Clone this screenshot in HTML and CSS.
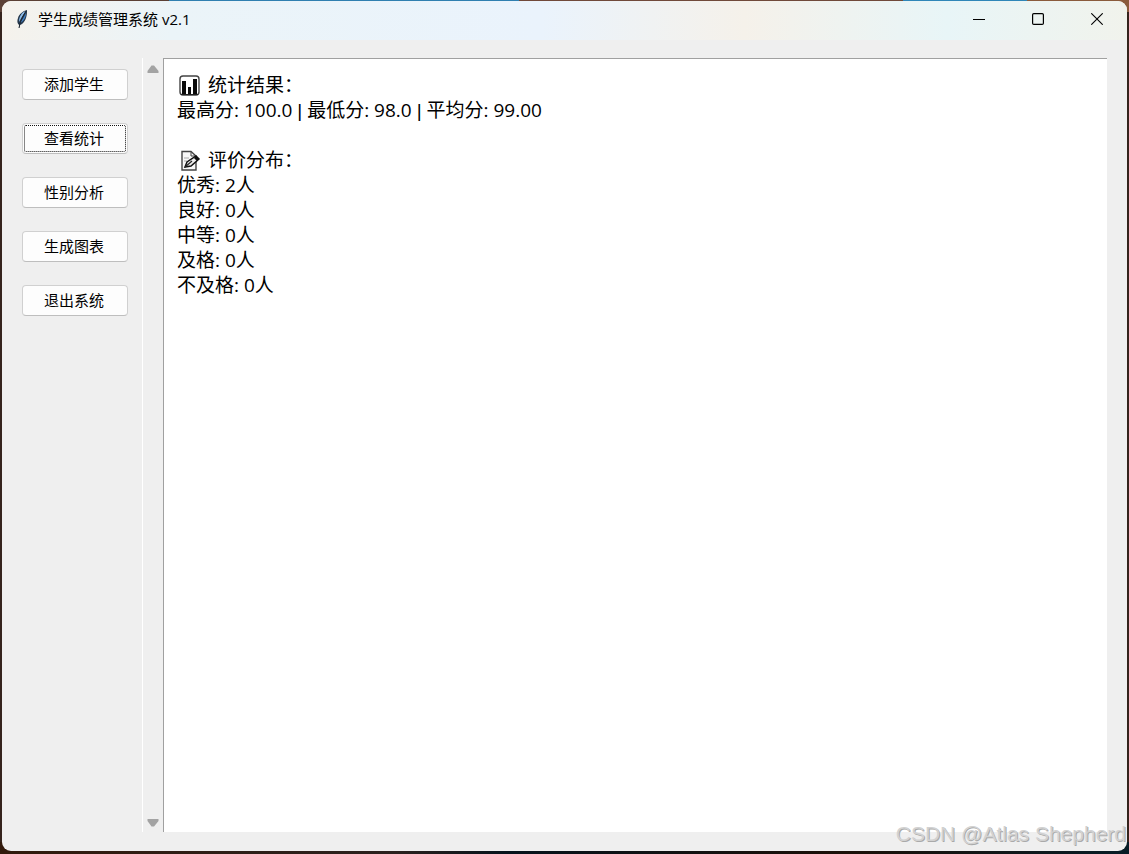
FILE: index.html
```html
<!DOCTYPE html>
<html lang="zh-CN">
<head>
    <meta charset="UTF-8">
    <meta name="viewport" content="width=device-width, initial-scale=1.0">
    <title>学生成绩管理系统 v2.1</title>
    <link rel="stylesheet" href="styles.css">
</head>
<body>
    <div class="window">
        <header class="titlebar">
            <svg class="feather" width="14" height="20" viewBox="0 0 14 20">
                <path d="M12 1C8 2 4 5 3 9C2 12 2 14 4 16L4 19L5 16C8 15 10 12 11 9C12 6 12 3 12 1Z" fill="#26384c"/>
                <path d="M11 2C7 3 4 7 4 13C6 9 8 6 11 2Z" fill="#8fbdea"/>
                <path d="M11 4C11 8 9 12 5 14C7 11 9 8 11 4Z" fill="#3f7fc4"/>
                <path d="M11 2C8 7 5 12 4 19" fill="none" stroke="#1c2530" stroke-width="1"/>
            </svg>
            <h1>学生成绩管理系统 v2.1</h1>
            <div class="controls">
                <button type="button" aria-label="最小化">
                    <svg width="12" height="12"><path d="M0 6.5H12" stroke="#000"/></svg>
                </button>
                <button type="button" aria-label="最大化">
                    <svg width="12" height="12"><rect x="0.6" y="0.6" width="10.8" height="10.8" rx="1.2" fill="none" stroke="#000" stroke-width="1.2"/></svg>
                </button>
                <button type="button" aria-label="关闭">
                    <svg width="12" height="12"><path d="M0.3 0.3L11.7 11.7M11.7 0.3L0.3 11.7" stroke="#000" stroke-width="1.1"/></svg>
                </button>
            </div>
        </header>
        <main class="content">
            <nav class="menu">
                <button type="button">添加学生</button>
                <button type="button" class="active">查看统计</button>
                <button type="button">性别分析</button>
                <button type="button">生成图表</button>
                <button type="button">退出系统</button>
            </nav>
            <div class="scrollbar">
                <button type="button" aria-label="向上滚动">
                    <svg width="12" height="8"><path d="M4.5 0.5H7L11.5 6V8H0.5V6Z" fill="#a3a3a3"/></svg>
                </button>
                <button type="button" aria-label="向下滚动">
                    <svg width="12" height="8"><path d="M0.5 0H11.5V2L7 7.5H4.5L0.5 2Z" fill="#a3a3a3"/></svg>
                </button>
            </div>
            <section class="output">
                <p class="heading">
                    <svg width="22" height="22" viewBox="0 0 22 22">
                        <rect x="1" y="1" width="19" height="19" rx="3" fill="#fff" stroke="#444" stroke-width="1.4"/>
                        <path d="M3 6H7V20H3ZM9 12H12V20H9ZM14 4H18V20H14Z" fill="#0a0a0a"/>
                        <path d="M2 19.5H19" stroke="#222"/>
                    </svg>
                    统计结果：
                </p>
                <p>最高分: 100.0 <span class="bar">|</span> 最低分: 98.0 <span class="bar">|</span> 平均分: 99.00</p>
                <br>
                <p class="heading">
                    <svg width="22" height="22" viewBox="0 0 22 22">
                        <path d="M3 1.5H12L17 6V20H3Z" fill="#f8f8f8" stroke="#444" stroke-width="1.4"/>
                        <path d="M12 2V6H17" fill="none" stroke="#444"/>
                        <path d="M5 8H10M5 11H8" stroke="#aaa"/>
                        <path d="M6 17L8 12L17 6L20 9L12 16Z" fill="#eee" stroke="#111" stroke-width="1.5"/>
                        <path d="M16 7L19 10" stroke="#111" stroke-width="3"/>
                        <path d="M6 17L13 11" stroke="#222" stroke-width="1.2"/>
                    </svg>
                    评价分布：
                </p>
                <p>优秀: 2人</p>
                <p>良好: 0人</p>
                <p>中等: 0人</p>
                <p>及格: 0人</p>
                <p>不及格: 0人</p>
            </section>
        </main>
    </div>
    <div class="watermark">CSDN @Atlas Shepherd</div>
</body>
</html>
```

FILE: styles.css
```css
*{
    box-sizing:border-box;
}
body{
    margin:0;
    height:100vh;
    padding:1px 2px 3px;
    background:
        linear-gradient(90deg, #5b4035 0, #5b4035 15%, #2f7fb0 15%, #2f7fb0 46%, #70493a 46%, #70493a 80%, #2f86b8 80%, #2f86b8 91%, #8a5b3c 91%) top / 100% 12px no-repeat,
        linear-gradient(90deg, #321a0c, #2b211e 35%, #06131c 45%, #1c1008 75%, #071c26) bottom / 100% 12px no-repeat,
        #35231c;
    font-family:"Open Sans", "Noto Sans CJK SC", sans-serif;
    color:#000;
}
button{
    font:inherit;
    color:inherit;
    padding:0;
}
svg{
    display:block;
    flex:none;
}
.window{
    height:100%;
    display:flex;
    flex-direction:column;
    background:#efefef;
    border-radius:9px;
    overflow:hidden;
}
.titlebar{
    height:39px;
    flex:none;
    display:flex;
    align-items:center;
    padding:0 1px 3px 13px;
    background:linear-gradient(90deg, #f5f2ec 0, #ebf4f8 15%, #eaf3fc 48%, #f5f1ea 66%, #e8f5f7 84%, #f1f3ec 100%);
}
.titlebar h1{
    margin:0 0 0 9px;
    font-size:15px;
    line-height:20px;
    font-weight:400;
}
.controls{
    display:flex;
    height:100%;
    margin-left:auto;
}
.controls button{
    width:59px;
    display:flex;
    align-items:center;
    justify-content:center;
    border:0;
    background:none;
}
.content{
    flex:1;
    min-height:0;
    display:flex;
    padding:18px 20px 19px;
}
.menu{
    width:120px;
    padding:11px 14px 0 0;
    display:flex;
    flex-direction:column;
    gap:23px;
}
.menu button{
    height:31px;
    padding:0 2px 2px 0;
    border:1px solid #d0d0d0;
    border-bottom-color:#bebebe;
    border-radius:4px;
    background:#fdfdfd;
    font-size:15px;
    line-height:20px;
}
.menu .active{
    outline:1px dotted #111;
    outline-offset:-3px;
}
.scrollbar{
    width:21px;
    display:flex;
    flex-direction:column;
    justify-content:space-between;
    padding:7px 0 5px 4px;
    border-left:1px solid #fff;
}
.scrollbar button{
    width:12px;
    border:0;
    background:none;
}
.output{
    flex:1;
    padding:14px 13px;
    border-top:1px solid #a0a0a0;
    border-left:1px solid #a0a0a0;
    background:#fff;
    overflow:auto;
    font-size:19px;
    line-height:25px;
}
.output p{
    margin:0;
}
.output .heading{
    display:flex;
    align-items:center;
    gap:7px;
    padding-left:2px;
}
.bar{
    font-family:"Liberation Sans", sans-serif;
}
.watermark{
    position:absolute;
    right:3px;
    bottom:6px;
    font-family:"Liberation Sans", sans-serif;
    font-size:21px;
    line-height:28px;
    color:#d2d2d2;
    text-shadow:1px 1px 0 #aaa;
    pointer-events:none;
}
```
